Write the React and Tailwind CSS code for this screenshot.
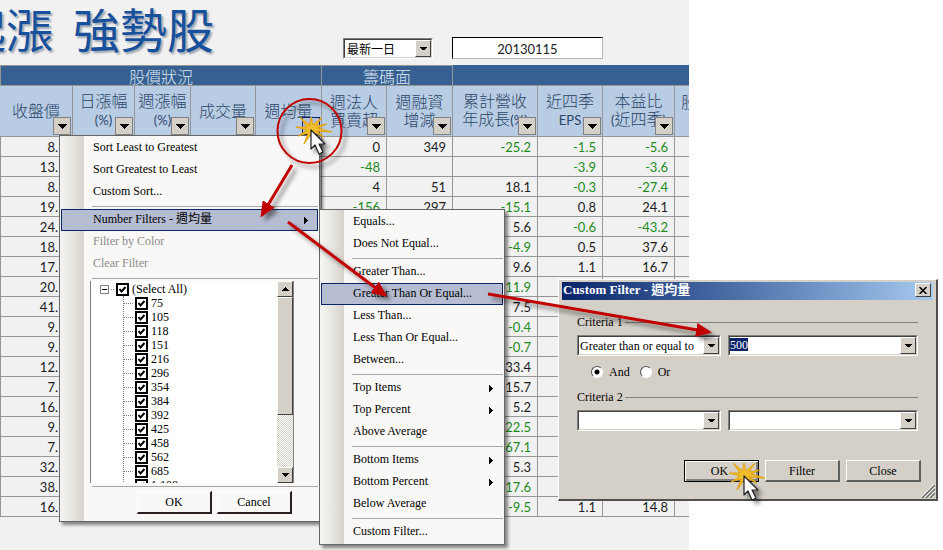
import { useState } from 'react'

const UI_FONT = "font-['Liberation_Serif','Noto_Sans_CJK_TC',serif]"
const CJK_FONT = "font-['Noto_Sans_CJK_TC',sans-serif]"

const rows = [
  ['8.', '0', '349', '-25.2', '-1.5', '-5.6'],
  ['13.', '-48', '', '', '-3.9', '-3.6'],
  ['8.', '4', '51', '18.1', '-0.3', '-27.4'],
  ['19.', '-156', '297', '-15.1', '0.8', '24.1'],
  ['24.', '', '', '5.6', '-0.6', '-43.2'],
  ['18.', '', '', '-4.9', '0.5', '37.6'],
  ['17.', '', '', '9.6', '1.1', '16.7'],
  ['20.', '', '', '11.9', '', ''],
  ['41.', '', '', '7.5', '', ''],
  ['9.', '', '', '-0.4', '', ''],
  ['9.', '', '', '-0.7', '', ''],
  ['12.', '', '', '33.4', '', ''],
  ['7.', '', '', '15.7', '', ''],
  ['16.', '', '', '5.2', '', ''],
  ['9.', '', '', '22.5', '', ''],
  ['7.', '', '', '67.1', '', ''],
  ['32.', '', '', '5.3', '', ''],
  ['38.', '', '', '17.6', '', ''],
  ['16.', '', '', '-9.5', '1.1', '14.8'],
]

// rows whose minus sign is hidden behind the open submenu
const greenRows = [7, 14, 15, 17]

const values = ['75', '105', '118', '151', '216', '296', '354', '384', '392', '425', '458', '562', '685', '1,108']

function Triangle({ className }) {
  return (
    <svg viewBox="0 0 9 5" className={className} fill="currentColor" shapeRendering="crispEdges" aria-hidden="true">
      <path d="M0 0h9L4.500 5z" />
    </svg>
  )
}

function HeaderCell({ label, active, children }) {
  return (
    <th className="relative border-r border-b border-[#969696] bg-[#b8cce4] p-0 pb-0.5 font-light">
      <div className="text-base leading-[18px] whitespace-nowrap text-[#2c4668]">{children}</div>
      <button
        type="button"
        aria-label={`Filter ${label}`}
        className={`absolute right-px bottom-px flex size-[18px] items-center justify-center border ${active ? 'border-[#0a246a] bg-[#b8c0d8]' : 'border-[#808080] bg-[#d4d0c8]'}`}
      >
        <Triangle className="w-[9px] text-black" />
      </button>
    </th>
  )
}

function Latin({ children }) {
  return <span className="font-['Lato',sans-serif] text-[13px] font-normal">{children}</span>
}

function ValueCell({ value, green }) {
  const color = green || value.startsWith('-') ? 'text-[#1c8c1c]' : 'text-[#1c1c1c]'
  return <td className={`border-r border-b border-[#969696] p-0 pr-1.5 text-right ${color}`}>{value}</td>
}

function Combo({ className, children }) {
  return (
    <div className={`border border-t-[#808080] border-r-white border-b-white border-l-[#808080] ${className}`}>
      <div className="relative flex h-[19px] border border-t-[#404040] border-r-[#d4d0c8] border-b-[#d4d0c8] border-l-[#404040] bg-white">
        {children}
        <span className="pointer-events-none absolute inset-y-0 right-0 flex w-4 items-center justify-center border border-t-white border-r-[#404040] border-b-[#404040] border-l-white bg-[#d4d0c8]">
          <Triangle className="w-[7px] text-black" />
        </span>
      </div>
    </div>
  )
}

function Sheet() {
  return (
    <section className={`min-h-screen w-max overflow-hidden bg-[#f1f1f1] ${CJK_FONT}`}>
      <header className="flex h-[65px] items-end">
        <h1 className="-ml-[41px] flex gap-5 self-start pt-0.5 text-[47px] leading-[52px] text-[#17509c] [text-shadow:2px_2px_2px_#9aa3b0]">
          <span>起漲</span>
          <span>強勢股</span>
        </h1>
        <Combo className="mb-1.5 ml-[129px] w-[90px]">
          <select aria-label="日期範圍" defaultValue="d1" className="w-full appearance-none pl-0.5 text-[12px] leading-4 text-black">
            <option value="d1">最新一日</option>
          </select>
        </Combo>
        <input
          aria-label="日期"
          readOnly
          value="20130115"
          className="mb-1.5 ml-[19px] h-[22px] w-[151px] border border-t-black border-r-[#b8b8b8] border-b-[#b8b8b8] border-l-black bg-white pt-0.5 text-center font-['Lato',sans-serif] text-[13px] text-[#222]"
        />
      </header>

      <table className="w-[689px] table-fixed border-separate border-spacing-0">
        <colgroup>
          <col className="w-[73px]" />
          <col className="w-[62px]" />
          <col className="w-[56px]" />
          <col className="w-[65px]" />
          <col className="w-[66px]" />
          <col className="w-[65px]" />
          <col className="w-[66px]" />
          <col className="w-[85px]" />
          <col className="w-[65px]" />
          <col className="w-[72px]" />
          <col />
        </colgroup>
        <thead>
          <tr className="h-[21px] bg-[#366092] text-base leading-[18px] text-[#dbe5f1]">
            <th colSpan={5} className="border border-[#969696] p-0 font-light">股價狀況</th>
            <th colSpan={2} className="border-y border-r border-[#969696] p-0 font-light">籌碼面</th>
            <th colSpan={4} className="border-b border-[#969696] p-0" />
          </tr>
          <tr className="h-[51px]">
            <HeaderCell label="收盤價">收盤價</HeaderCell>
            <HeaderCell label="日漲幅">日漲幅<br /><Latin>(%)</Latin></HeaderCell>
            <HeaderCell label="週漲幅">週漲幅<br /><Latin>(%)</Latin></HeaderCell>
            <HeaderCell label="成交量">成交量</HeaderCell>
            <HeaderCell label="週均量" active>週均量</HeaderCell>
            <HeaderCell label="週法人買賣超">週法人<br />買賣超</HeaderCell>
            <HeaderCell label="週融資增減">週融資<br />增減</HeaderCell>
            <HeaderCell label="累計營收年成長">累計營收<br />年成長<Latin>(%)</Latin></HeaderCell>
            <HeaderCell label="近四季 EPS">近四季<br /><Latin>EPS</Latin></HeaderCell>
            <HeaderCell label="本益比">本益比<br /><Latin>(</Latin>近四季<Latin>)</Latin></HeaderCell>
            <th className="overflow-hidden border-b border-[#969696] bg-[#b8cce4] p-0 pl-1.5 text-left align-top">
              <div className="pt-1.5 text-base leading-[18px] font-light text-[#2c4668]">股</div>
            </th>
          </tr>
        </thead>
        <tbody className="font-['Lato',sans-serif] text-[13px] leading-[18px]">
          {rows.map((r, i) => (
            <tr key={i} className="h-5">
              <td className="border-x border-b border-[#969696] p-0 pr-3.5 text-right text-[#1c1c1c]">{r[0]}</td>
              {[1, 2, 3, 4].map((c) => (
                <td key={c} className="border-r border-b border-[#969696] p-0" />
              ))}
              <ValueCell value={r[1]} />
              <ValueCell value={r[2]} />
              <ValueCell value={r[3]} green={greenRows.includes(i)} />
              <ValueCell value={r[4]} />
              <ValueCell value={r[5]} />
              <td className="border-b border-[#969696] p-0" />
            </tr>
          ))}
        </tbody>
      </table>
    </section>
  )
}

function MenuItem({ children, submenu, active, disabled }) {
  return (
    <button
      type="button"
      disabled={disabled}
      className={`flex h-[22px] w-full items-center justify-between border pr-[9px] pb-0.5 pl-[31px] text-left whitespace-nowrap ${active ? 'border-[#0a246a] bg-[#b6bdd2]' : 'border-transparent'} ${disabled ? 'text-[#8c8c8c]' : 'text-black'}`}
    >
      {children}
      {submenu && (
        <svg viewBox="0 0 4 7" className="mt-0.5 h-[7px] w-1" shapeRendering="crispEdges" aria-hidden="true">
          <path d="M0 0v7L4 3.500z" />
        </svg>
      )}
    </button>
  )
}

function Separator() {
  return <hr className="mt-[3px] mb-0.5 ml-[31px] border-0 border-t border-[#a6a6a6]" />
}

const MENU = 'border border-[#666] bg-[#f9f8f7] bg-[linear-gradient(to_right,#f6f5f3,#e8e6e1_50%,#d6d3cb)] bg-[length:24px_100%] bg-no-repeat p-px text-[12px] leading-4 shadow-[3px_3px_3px_rgba(0,0,0,0.45)]'

function Check({ label }) {
  const [on, setOn] = useState(true)
  return (
    <label className="flex items-center gap-[3px]">
      <span className="relative flex">
        <input
          type="checkbox"
          checked={on}
          onChange={() => setOn(!on)}
          className="size-[13px] appearance-none border-2 border-black bg-white"
        />
        {on && (
          <svg viewBox="0 0 13 13" className="pointer-events-none absolute inset-0" fill="none" stroke="#000" strokeWidth="2" aria-hidden="true">
            <path d="M3.500 6l2 2.500 4-4.500" />
          </svg>
        )}
      </span>
      {label}
    </label>
  )
}

function ValueTree() {
  return (
    <div className="ml-[29px] mr-6 flex h-[202px] border-x border-[#808080] bg-white">
      <div className="flex-1 overflow-hidden pt-px pl-[9px]">
        <div className="flex h-3.5 items-center">
          <button type="button" aria-label="Collapse" className="flex size-[9px] items-center border border-[#808080] px-px">
            <span className="h-px w-full bg-black" />
          </button>
          <span className="mx-0.5 w-[3px] border-t border-dotted border-[#808080]" />
          <Check label="(Select All)" />
        </div>
        <ul className="ml-[23px] border-l border-dotted border-[#808080]">
          {values.map((v) => (
            <li key={v} className="flex h-3.5 items-center gap-0.5">
              <span className="w-[9px] border-t border-dotted border-[#808080]" />
              <Check label={v} />
            </li>
          ))}
        </ul>
      </div>
      <div className="flex w-4 flex-col bg-[repeating-conic-gradient(#d4d0c8_0_25%,#fff_0_50%)] bg-[length:2px_2px]">
        <button type="button" aria-label="Scroll up" className="flex h-4 items-center justify-center border border-t-white border-r-[#404040] border-b-[#404040] border-l-white bg-[#d4d0c8]">
          <Triangle className="w-[7px] rotate-180" />
        </button>
        <div className="h-[118px] border border-t-white border-r-[#404040] border-b-[#404040] border-l-white bg-[#d4d0c8]" />
        <button type="button" aria-label="Scroll down" className="mt-auto flex h-4 items-center justify-center border border-t-white border-r-[#404040] border-b-[#404040] border-l-white bg-[#d4d0c8]">
          <Triangle className="w-[7px]" />
        </button>
      </div>
    </div>
  )
}

function FilterMenu() {
  const button = 'h-[23px] w-[75px] border border-t-white border-l-white border-r-2 border-b-2 border-r-[#2a2020] border-b-[#2a2020] bg-[#f9f8f7] pb-px'
  return (
    <div className={`absolute top-[135px] left-[59px] w-[261px] ${MENU}`}>
      <MenuItem>Sort Least to Greatest</MenuItem>
      <MenuItem>Sort Greatest to Least</MenuItem>
      <MenuItem>Custom Sort...</MenuItem>
      <Separator />
      <MenuItem active submenu>Number Filters - 週均量</MenuItem>
      <MenuItem disabled>Filter by Color</MenuItem>
      <MenuItem disabled>Clear Filter</MenuItem>
      <Separator />
      <ValueTree />
      <Separator />
      <div className="flex justify-end gap-[5px] pt-0.5 pr-[26px] pb-1.5">
        <button type="button" className={button}>OK</button>
        <button type="button" className={button}>Cancel</button>
      </div>
    </div>
  )
}

function NumberFiltersMenu() {
  return (
    <div className={`absolute top-[209px] left-[319px] w-[186px] ${MENU}`}>
      <MenuItem>Equals...</MenuItem>
      <MenuItem>Does Not Equal...</MenuItem>
      <Separator />
      <MenuItem>Greater Than...</MenuItem>
      <MenuItem active>Greater Than Or Equal...</MenuItem>
      <MenuItem>Less Than...</MenuItem>
      <MenuItem>Less Than Or Equal...</MenuItem>
      <MenuItem>Between...</MenuItem>
      <Separator />
      <MenuItem submenu>Top Items</MenuItem>
      <MenuItem submenu>Top Percent</MenuItem>
      <MenuItem>Above Average</MenuItem>
      <Separator />
      <MenuItem submenu>Bottom Items</MenuItem>
      <MenuItem submenu>Bottom Percent</MenuItem>
      <MenuItem>Below Average</MenuItem>
      <Separator />
      <MenuItem>Custom Filter...</MenuItem>
    </div>
  )
}

function Radio({ label, checked, onChange }) {
  return (
    <label className="flex items-center gap-1.5">
      <input
        type="radio"
        name="join"
        checked={checked}
        onChange={onChange}
        className="size-3 appearance-none rounded-full border border-t-[#505050] border-r-white border-b-white border-l-[#505050] bg-white checked:bg-[radial-gradient(circle,#000_2px,#fff_3px)]"
      />
      {label}
    </label>
  )
}

function Legend({ children }) {
  return (
    <div className="flex h-4 items-center gap-0.5">
      <span className="whitespace-nowrap">{children}</span>
      <span className="h-px flex-1 bg-[#808080]" />
    </div>
  )
}

function CustomFilterDialog() {
  const [join, setJoin] = useState('and')
  const [value, setValue] = useState('500')
  const button = 'h-[22px] w-[75px] border border-t-white border-l-white border-r-2 border-b-2 border-r-[#606060] border-b-[#606060]'

  return (
    <div role="dialog" aria-label="Custom Filter" className="absolute top-[279px] left-[558px] w-[380px] border border-r-2 border-b-2 border-t-white border-l-white border-r-[#505050] border-b-[#505050] bg-[#d4d0c8] text-[12px] leading-4">
      <div className="mx-[3px] mt-0.5 flex h-[18px] items-center justify-between bg-linear-to-r from-[#0a246a] to-[#a6caf0] pr-0.5 pb-0.5 pl-px text-[13px] font-bold text-white">
        <span>Custom Filter - 週均量</span>
        <button type="button" aria-label="Close dialog" className="flex h-3.5 w-4 items-center justify-center border border-t-white border-r-[#404040] border-b-[#404040] border-l-white bg-[#d4d0c8]">
          <svg viewBox="0 0 8 7" className="h-[7px] w-2" stroke="#000" strokeWidth="1.500" aria-hidden="true">
            <path d="M.500 0l7 7M7.500 0l-7 7" />
          </svg>
        </button>
      </div>

      <div className="px-[18px] pt-3.5">
        <Legend>Criteria 1</Legend>
        <div className="mt-[5px] flex gap-[7px]">
          <Combo className="w-36">
            <select aria-label="Criteria 1 operator" defaultValue="gte" className="w-full appearance-none pl-px text-black">
              <option value="gte">Greater than or equal to</option>
            </select>
          </Combo>
          <Combo className="flex-1">
            <input
              aria-label="Criteria 1 value"
              value={value}
              onChange={(e) => setValue(e.target.value)}
              className="my-px field-sizing-content h-[13px] bg-[#0a246a] text-white"
            />
          </Combo>
        </div>
        <div className="mt-1.5 flex h-5 items-center gap-2.5 pl-3.5">
          <Radio label="And" checked={join === 'and'} onChange={() => setJoin('and')} />
          <Radio label="Or" checked={join === 'or'} onChange={() => setJoin('or')} />
        </div>
        <div className="mt-[7px]">
          <Legend>Criteria 2</Legend>
        </div>
        <div className="mt-[5px] flex gap-[7px]">
          <Combo className="w-36">
            <select aria-label="Criteria 2 operator" className="w-full appearance-none" />
          </Combo>
          <Combo className="flex-1">
            <input aria-label="Criteria 2 value" className="w-full" />
          </Combo>
        </div>
      </div>

      <div className="flex justify-end gap-1.5 pt-[29px] pr-[15px] pb-[17px]">
        <button type="button" className="h-[22px] w-[75px] border border-black pr-1 shadow-[inset_1px_1px_#fff,inset_-2px_-2px_#808080]">OK</button>
        <button type="button" className={button}>Filter</button>
        <button type="button" className={button}>Close</button>
      </div>
      <svg viewBox="0 0 14 14" className="absolute right-px bottom-px size-3.5" fill="none" aria-hidden="true">
        <path d="M1 14L14 1M5 14L14 5M9 14l5-5" stroke="#707070" strokeWidth="1.500" />
        <path d="M0 13L13 0M4 13L14 3M8 13l6-6" stroke="#fff" strokeWidth=".8" />
      </svg>
    </div>
  )
}

function Click({ x, y }) {
  return (
    <g transform={`translate(${x} ${y})`}>
      <path
        d="M-12-12L-2.500-4-1-12 1-4 10-12 4-3 15-5 6-1 20 3 5 2 12 8 3 4 2 10-1 5-8 15-4 4-14 7-5 1-16-2-5-2z"
        fill="#f2bd2a"
        stroke="#e0a310"
        strokeWidth="1"
      />
      <g filter="url(#soft)">
        <path d="M-1 1v19l4-4 4 9 4-2-4-8h6z" fill="#fdfdfd" stroke="#222" strokeWidth="1.200" strokeLinejoin="round" />
      </g>
    </g>
  )
}

function Annotations() {
  return (
    <svg width="943" height="550" viewBox="0 0 943 550" className="pointer-events-none absolute top-0 left-0" aria-hidden="true">
      <defs>
        <filter id="soft" filterUnits="userSpaceOnUse" x="-50" y="-50" width="1050" height="650">
          <feDropShadow dx="4" dy="4" stdDeviation="2" floodColor="#000" floodOpacity=".45" />
        </filter>
        <marker id="head" viewBox="0 0 16 14" refX="13" refY="7" markerWidth="16" markerHeight="14" markerUnits="userSpaceOnUse" orient="auto">
          <path d="M0 0L16 7 0 14z" fill="#c00000" />
        </marker>
      </defs>
      <g filter="url(#soft)" stroke="#c00000" fill="none">
        <circle cx="309.500" cy="131" r="32" strokeWidth="2" />
        <path d="M292 165L262 215" strokeWidth="3" markerEnd="url(#head)" />
        <path d="M288 222L385 295" strokeWidth="3" markerEnd="url(#head)" />
        <path d="M488 294L709 332" strokeWidth="3" markerEnd="url(#head)" />
      </g>
      <Click x={312} y={129} />
      <Click x={745} y={475} />
    </svg>
  )
}

function App() {
  return (
    <main className={`relative min-h-screen overflow-hidden bg-white ${UI_FONT}`}>
      <Sheet />
      <FilterMenu />
      <NumberFiltersMenu />
      <CustomFilterDialog />
      <Annotations />
    </main>
  )
}

export default App
